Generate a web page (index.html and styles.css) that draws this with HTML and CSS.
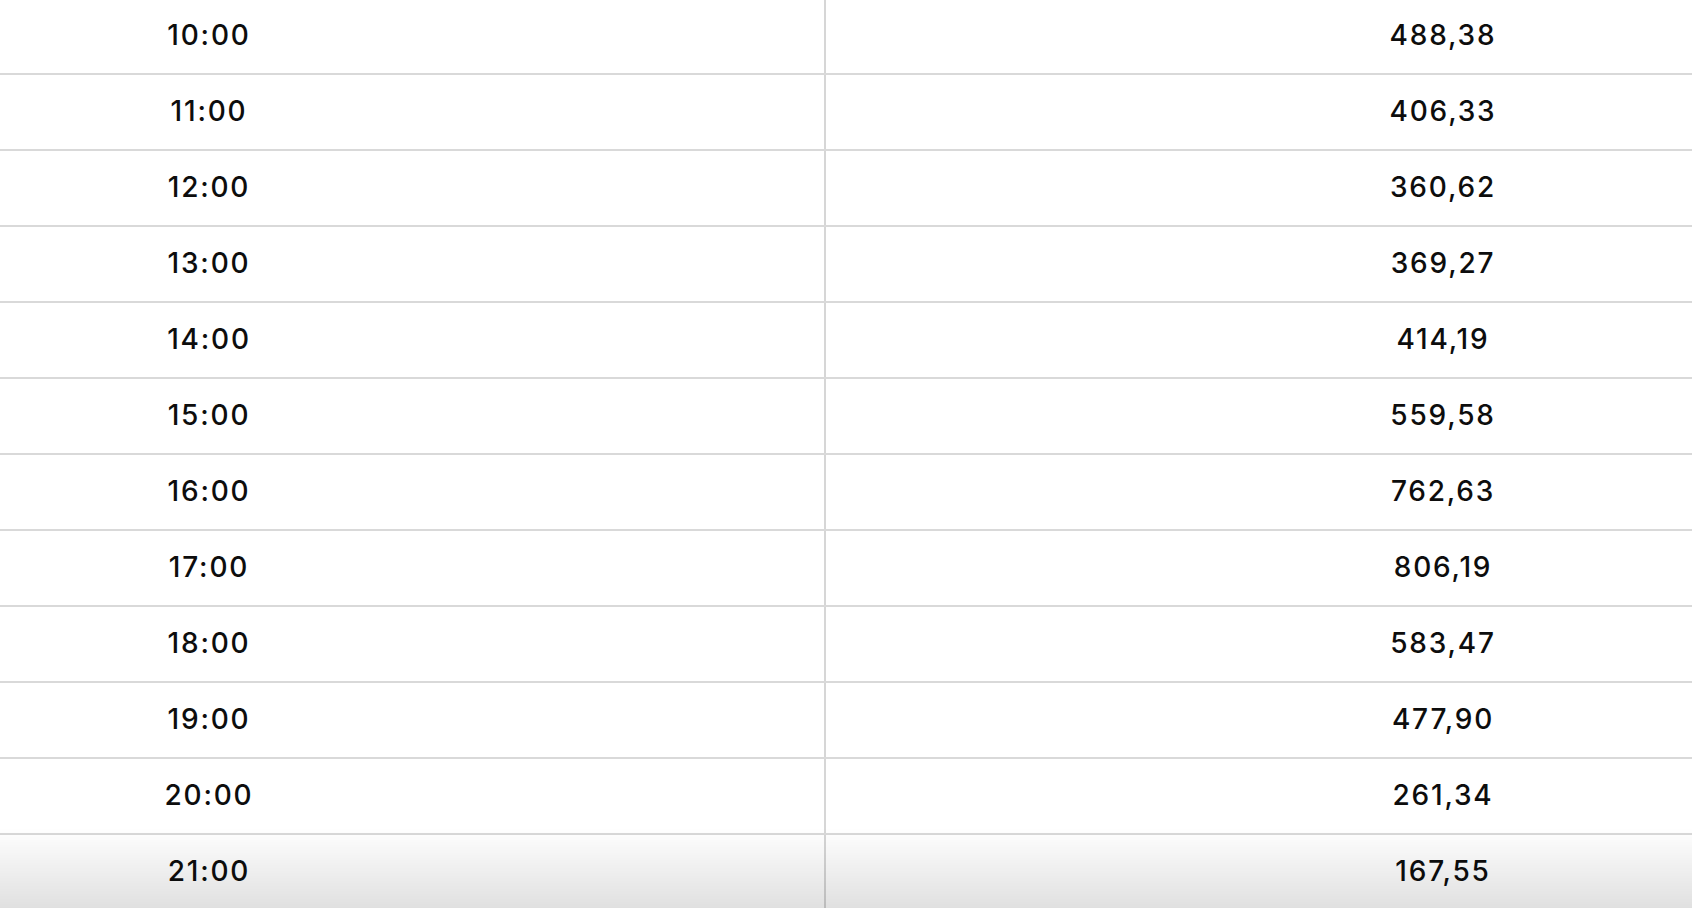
FILE: index.html
```html
<!DOCTYPE html>
<html lang="en">
<head>
  <meta charset="UTF-8" />
  <title>Hourly values</title>
  <link rel="stylesheet" href="styles.css">
</head>
<body>
  <div class="table">
    <div class="row"><div class="cell hour">10:00</div><div class="cell value">488,38</div></div>
    <div class="row"><div class="cell hour">11:00</div><div class="cell value">406,33</div></div>
    <div class="row"><div class="cell hour">12:00</div><div class="cell value">360,62</div></div>
    <div class="row"><div class="cell hour">13:00</div><div class="cell value">369,27</div></div>
    <div class="row"><div class="cell hour">14:00</div><div class="cell value">414,19</div></div>
    <div class="row"><div class="cell hour">15:00</div><div class="cell value">559,58</div></div>
    <div class="row"><div class="cell hour">16:00</div><div class="cell value">762,63</div></div>
    <div class="row"><div class="cell hour">17:00</div><div class="cell value">806,19</div></div>
    <div class="row"><div class="cell hour">18:00</div><div class="cell value">583,47</div></div>
    <div class="row"><div class="cell hour">19:00</div><div class="cell value">477,90</div></div>
    <div class="row"><div class="cell hour">20:00</div><div class="cell value">261,34</div></div>
    <div class="row"><div class="cell hour">21:00</div><div class="cell value">167,55</div></div>
  </div>
  <div class="fade"></div>
</body>
</html>
```

FILE: styles.css
```css
html, body {
  margin: 0;
  height: 100%;
  overflow: hidden;
}

body {
  font-family: Inter, 'Liberation Sans', sans-serif;
  background: #ffffff;
  color: #0d0d0d;
}

.table {
  display: flex;
  flex-direction: column;
  margin-top: -1px;
}

.row {
  display: grid;
  grid-template-columns: 826px 1fr;
  height: 74px;
  border-bottom: 2px solid #d9d9d9;
}

.cell {
  display: flex;
  align-items: center;
  justify-content: center;
  font-size: 28px;
  font-weight: 500;
  letter-spacing: 1.8px;
  padding-bottom: 2px;
}

.hour {
  padding-right: 406px;
  border-right: 2px solid #d6d6d6;
}

.value {
  padding-left: 368px;
}

.fade {
  position: fixed;
  left: 0;
  right: 0;
  bottom: 0;
  height: 80px;
  background: linear-gradient(rgba(0, 0, 0, 0), rgba(0, 0, 0, 0.12));
  pointer-events: none;
}
```
